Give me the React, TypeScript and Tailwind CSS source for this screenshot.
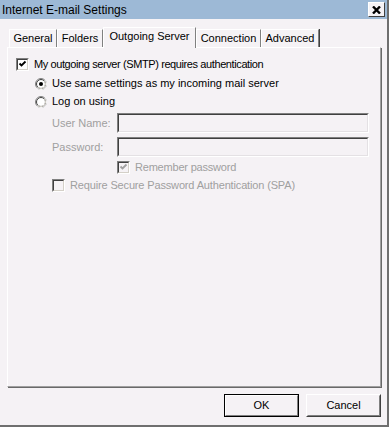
import React from 'react';

const Check = ({ color = '#000' }: { color?: string }) => (
  <svg width="9" height="9" viewBox="0 0 9 9">
    <path d="M1.5 3.5 L3.5 5.5 L7.5 1.5" fill="none" stroke={color} strokeWidth="1.8" />
  </svg>
);

const Checkbox = ({ checked, disabled }: { checked?: boolean; disabled?: boolean }) => (
  <div className="w-[13px] h-[13px] shrink-0 border border-t-[#808080] border-l-[#808080] border-b-white border-r-white">
    <div
      className={`w-full h-full border border-t-[#404040] border-l-[#404040] border-b-[#d4d0c8] border-r-[#d4d0c8] flex items-center justify-center ${
        disabled ? 'bg-[#f5f2f5]' : 'bg-white'
      }`}
    >
      {checked && <Check color={disabled ? '#a0a0a0' : '#000'} />}
    </div>
  </div>
);

const Radio = ({ checked }: { checked?: boolean }) => (
  <svg width="12" height="12" viewBox="0 0 12 12" className="shrink-0">
    <circle cx="6" cy="6" r="5.5" fill="#fff" stroke="#808080" />
    <path d="M9.89 2.11 A5.5 5.5 0 0 1 2.11 9.89" fill="none" stroke="#fff" />
    <circle cx="6" cy="6" r="4.5" fill="#fff" stroke="#404040" />
    <path d="M9.18 2.82 A4.5 4.5 0 0 1 2.82 9.18" fill="none" stroke="#d4d0c8" />
    {checked && <circle cx="6" cy="6" r="2" fill="#000" />}
  </svg>
);

const Tab = ({ label, width, active }: { label: string; width: string; active?: boolean }) =>
  active ? (
    <div
      className={`${width} h-[21px] -mb-px relative z-10 bg-[#f5f2f5] border-t border-l border-white border-r border-r-[#808080] flex justify-center pt-[3px]`}
    >
      {label}
    </div>
  ) : (
    <div
      className={`${width} h-[18px] border-t border-l border-white border-r border-r-[#808080] shadow-[1px_0_0_#404040] flex justify-center pt-[3px]`}
    >
      {label}
    </div>
  );

const Field = ({ label }: { label: string }) => (
  <div className="flex items-center h-[20px] ml-[36px]">
    <span className="w-[65px] text-[#a0a0a0]">{label}</span>
    <div className="w-[252px] h-[20px] border border-t-[#808080] border-l-[#808080] border-b-white border-r-white">
      <div className="w-full h-full border border-t-[#404040] border-l-[#404040] border-b-[#e4e1e4] border-r-[#e4e1e4]" />
    </div>
  </div>
);

export default function App() {
  return (
    <div className="w-[389px] h-[427px] bg-[#f5f2f5] border-r-2 border-b-2 border-[#6f6f6f] flex flex-col font-['Liberation_Sans',Arial,sans-serif] text-[11px] text-black leading-none">
      <div className="h-[19px] bg-[#9db9d6] flex items-center justify-between pl-[2px] pr-[2px]">
        <span className="text-[12px]">Internet E-mail Settings</span>
        <div className="w-[17px] h-[15px] bg-[#f5f2f5] border border-t-white border-l-white border-b-[#404040] border-r-[#404040] flex items-center justify-center">
          <svg width="9" height="8" viewBox="0 0 9 8">
            <path d="M1 0.5 L8 7.5 M8 0.5 L1 7.5" stroke="#000" strokeWidth="2.4" />
          </svg>
        </div>
      </div>

      <div className="mt-[8px] h-[20px] flex items-end pl-[9px]">
        <Tab label="General" width="w-[48px]" />
        <Tab label="Folders" width="w-[46px]" />
        <Tab label="Outgoing Server" width="w-[93px]" active />
        <Tab label="Connection" width="w-[65px]" />
        <Tab label="Advanced" width="w-[58px]" />
      </div>

      <div className="ml-[7px] w-[374px] h-[340px] border-t border-l border-white border-r border-b border-r-[#a0a0a0] border-b-[#a0a0a0] shadow-[1px_1px_0_#696969] pt-[9px] pl-[8px]">
        <div className="flex items-center h-[15px] gap-[5px]">
          <Checkbox checked />
          <span className="tracking-[-0.4px]">My outgoing server (SMTP) requires authentication</span>
        </div>
        <div className="flex items-center h-[15px] gap-[5px] mt-[4px] ml-[19px]">
          <Radio checked />
          <span>Use same settings as my incoming mail server</span>
        </div>
        <div className="flex items-center h-[15px] gap-[5px] mt-[3px] ml-[19px]">
          <Radio />
          <span>Log on using</span>
        </div>
        <div className="mt-[4px]">
          <Field label="User Name:" />
        </div>
        <div className="mt-[4px]">
          <Field label="Password:" />
        </div>
        <div className="flex items-center h-[15px] gap-[5px] mt-[3px] ml-[101px]">
          <Checkbox checked disabled />
          <span className="text-[#a0a0a0] tracking-[-0.2px]">Remember password</span>
        </div>
        <div className="flex items-center h-[15px] gap-[5px] mt-[3px] ml-[36px]">
          <Checkbox disabled />
          <span className="text-[#a0a0a0] tracking-[-0.15px]">Require Secure Password Authentication (SPA)</span>
        </div>
      </div>

      <div className="mt-[7px] flex justify-end gap-[7px] pr-[6px]">
        <button className="w-[75px] h-[23px] bg-[#f5f2f5] border border-[#000]">
          <div className="w-full h-full border border-t-white border-l-white border-b-[#808080] border-r-[#808080] flex items-center justify-center">
            OK
          </div>
        </button>
        <button className="w-[75px] h-[23px] bg-[#f5f2f5] border border-t-white border-l-white border-b-[#404040] border-r-[#404040]">
          <div className="w-full h-full border border-transparent border-b-[#808080] border-r-[#808080] flex items-center justify-center">
            Cancel
          </div>
        </button>
      </div>
    </div>
  );
}
